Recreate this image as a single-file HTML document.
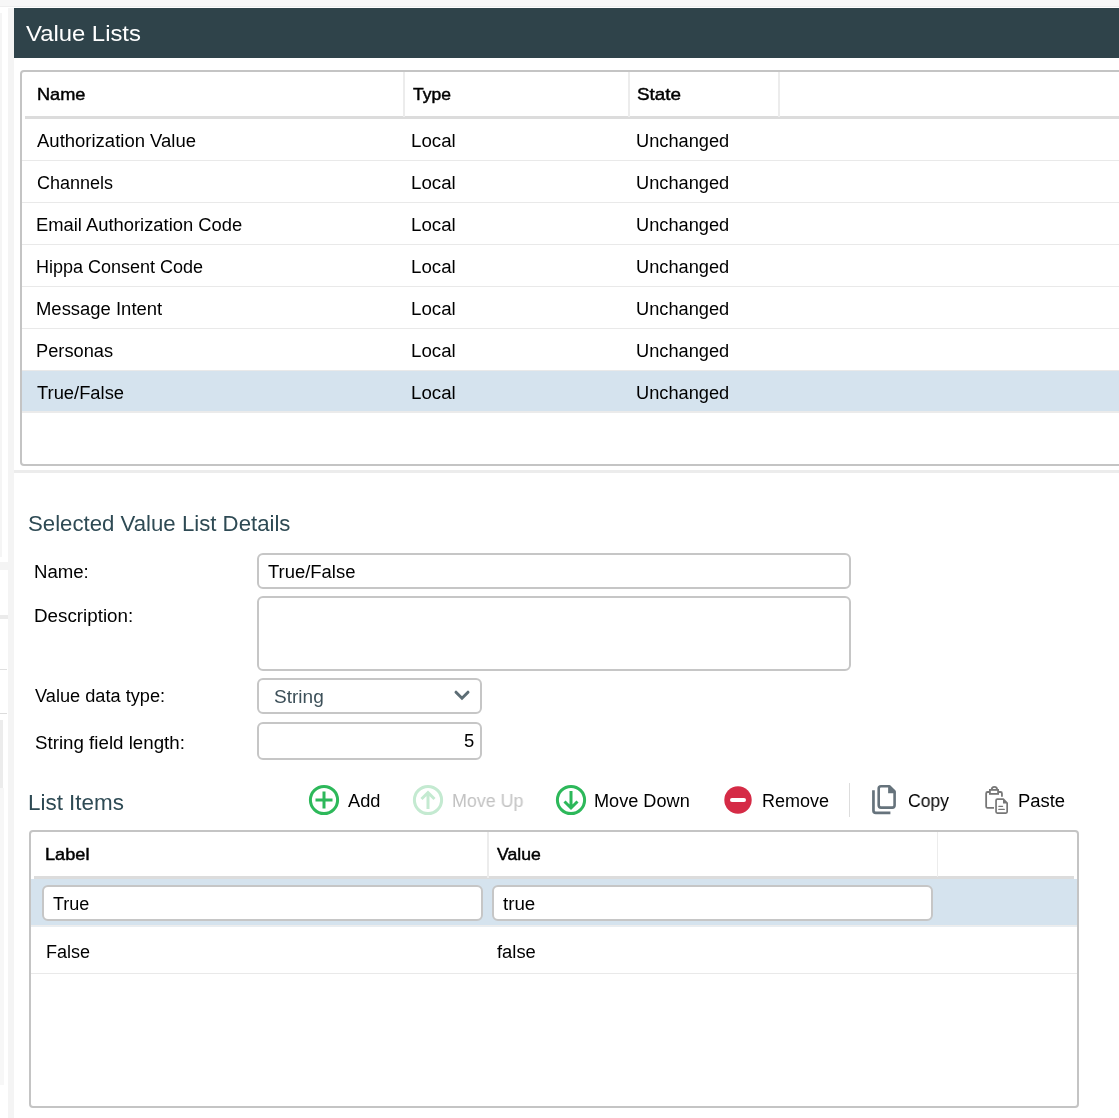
<!DOCTYPE html>
<html><head><meta charset="utf-8">
<style>
html,body{margin:0;padding:0;background:#fff;width:1119px;height:1118px;overflow:hidden;position:relative;font-family:"Liberation Sans",sans-serif;}
.a{position:absolute;box-sizing:border-box;}
.t{position:absolute;white-space:nowrap;will-change:transform;}
</style></head><body>
<div class="a" style="left:0px;top:0px;width:1119px;height:6px;background:#f7f7f7;"></div>
<div class="a" style="left:0px;top:6px;width:1119px;height:1px;background:#eeeeee;"></div>
<div class="a" style="left:0px;top:13px;width:2px;height:544px;background:#f5f5f5;"></div>
<div class="a" style="left:8px;top:8px;width:6px;height:1110px;background:#f4f4f4;"></div>
<div class="a" style="left:0px;top:562px;width:8px;height:8px;background:#f4f4f4;"></div>
<div class="a" style="left:0px;top:615px;width:8px;height:4px;background:#ebebeb;"></div>
<div class="a" style="left:0px;top:669px;width:7px;height:1px;background:#e0e0e0;"></div>
<div class="a" style="left:0px;top:713px;width:7px;height:1px;background:#dcdcdc;"></div>
<div class="a" style="left:0px;top:720px;width:3px;height:68px;background:#ececec;"></div>
<div class="a" style="left:0px;top:788px;width:4px;height:297px;background:#f7f7f7;"></div>
<div class="a" style="left:14px;top:8px;width:1105px;height:50px;background:#2f434a;"></div>
<div class="t" style="left:25.62px;top:22.95px;font-size:22.5px;line-height:22.5px;color:#fff;transform:scaleX(1.0603);transform-origin:0 0;">Value Lists</div>
<div class="a" style="left:20px;top:70px;width:1200px;height:396px;border:2px solid #c4c4c4;border-radius:4px;"></div>
<div class="a" style="left:25px;top:116px;width:1100px;height:3px;background:#dcdcdc;"></div>
<div class="a" style="left:403px;top:72px;width:2px;height:45px;background:#ececec;"></div>
<div class="a" style="left:628px;top:72px;width:2px;height:45px;background:#ececec;"></div>
<div class="a" style="left:778px;top:72px;width:2px;height:45px;background:#ececec;"></div>
<div class="t" style="left:36.63px;top:86.31px;font-size:17px;line-height:17px;color:#000;transform:scaleX(1.0688);transform-origin:0 0;-webkit-text-stroke:0.45px #000;">Name</div>
<div class="t" style="left:413.01px;top:86.31px;font-size:17px;line-height:17px;color:#000;transform:scaleX(1.0285);transform-origin:0 0;-webkit-text-stroke:0.45px #000;">Type</div>
<div class="t" style="left:636.97px;top:86.31px;font-size:17px;line-height:17px;color:#000;transform:scaleX(1.1079);transform-origin:0 0;-webkit-text-stroke:0.45px #000;">State</div>
<div class="a" style="left:22px;top:160px;width:1100px;height:1px;background:#e9e9e9;"></div>
<div class="t" style="left:37.45px;top:131.56px;font-size:18px;line-height:18px;color:#000;transform:scaleX(1.0277);transform-origin:0 0;">Authorization Value</div>
<div class="t" style="left:411.45px;top:131.56px;font-size:18px;line-height:18px;color:#000;transform:scaleX(1.0403);transform-origin:0 0;">Local</div>
<div class="t" style="left:636.08px;top:131.56px;font-size:18px;line-height:18px;color:#000;transform:scaleX(1.0125);transform-origin:0 0;">Unchanged</div>
<div class="a" style="left:22px;top:202px;width:1100px;height:1px;background:#e9e9e9;"></div>
<div class="t" style="left:36.76px;top:173.56px;font-size:18px;line-height:18px;color:#000;transform:scaleX(0.9942);transform-origin:0 0;">Channels</div>
<div class="t" style="left:411.45px;top:173.56px;font-size:18px;line-height:18px;color:#000;transform:scaleX(1.0403);transform-origin:0 0;">Local</div>
<div class="t" style="left:636.08px;top:173.56px;font-size:18px;line-height:18px;color:#000;transform:scaleX(1.0125);transform-origin:0 0;">Unchanged</div>
<div class="a" style="left:22px;top:244px;width:1100px;height:1px;background:#e9e9e9;"></div>
<div class="t" style="left:36.18px;top:215.56px;font-size:18px;line-height:18px;color:#000;transform:scaleX(1.0202);transform-origin:0 0;">Email Authorization Code</div>
<div class="t" style="left:411.45px;top:215.56px;font-size:18px;line-height:18px;color:#000;transform:scaleX(1.0403);transform-origin:0 0;">Local</div>
<div class="t" style="left:636.08px;top:215.56px;font-size:18px;line-height:18px;color:#000;transform:scaleX(1.0125);transform-origin:0 0;">Unchanged</div>
<div class="a" style="left:22px;top:286px;width:1100px;height:1px;background:#e9e9e9;"></div>
<div class="t" style="left:36.21px;top:257.56px;font-size:18px;line-height:18px;color:#000;transform:scaleX(0.9972);transform-origin:0 0;">Hippa Consent Code</div>
<div class="t" style="left:411.45px;top:257.56px;font-size:18px;line-height:18px;color:#000;transform:scaleX(1.0403);transform-origin:0 0;">Local</div>
<div class="t" style="left:636.08px;top:257.56px;font-size:18px;line-height:18px;color:#000;transform:scaleX(1.0125);transform-origin:0 0;">Unchanged</div>
<div class="a" style="left:22px;top:328px;width:1100px;height:1px;background:#e9e9e9;"></div>
<div class="t" style="left:36.17px;top:299.56px;font-size:18px;line-height:18px;color:#000;transform:scaleX(1.0251);transform-origin:0 0;">Message Intent</div>
<div class="t" style="left:411.45px;top:299.56px;font-size:18px;line-height:18px;color:#000;transform:scaleX(1.0403);transform-origin:0 0;">Local</div>
<div class="t" style="left:636.08px;top:299.56px;font-size:18px;line-height:18px;color:#000;transform:scaleX(1.0125);transform-origin:0 0;">Unchanged</div>
<div class="a" style="left:22px;top:370px;width:1100px;height:1px;background:#e9e9e9;"></div>
<div class="t" style="left:36.19px;top:341.56px;font-size:18px;line-height:18px;color:#000;transform:scaleX(1.0138);transform-origin:0 0;">Personas</div>
<div class="t" style="left:411.45px;top:341.56px;font-size:18px;line-height:18px;color:#000;transform:scaleX(1.0403);transform-origin:0 0;">Local</div>
<div class="t" style="left:636.08px;top:341.56px;font-size:18px;line-height:18px;color:#000;transform:scaleX(1.0125);transform-origin:0 0;">Unchanged</div>
<div class="a" style="left:22px;top:371px;width:1100px;height:40px;background:#d5e3ee;"></div>
<div class="a" style="left:22px;top:411px;width:1100px;height:2px;background:#ebebeb;"></div>
<div class="t" style="left:37.27px;top:383.56px;font-size:18px;line-height:18px;color:#000;transform:scaleX(1.0193);transform-origin:0 0;">True/False</div>
<div class="t" style="left:411.45px;top:383.56px;font-size:18px;line-height:18px;color:#000;transform:scaleX(1.0403);transform-origin:0 0;">Local</div>
<div class="t" style="left:636.08px;top:383.56px;font-size:18px;line-height:18px;color:#000;transform:scaleX(1.0125);transform-origin:0 0;">Unchanged</div>
<div class="a" style="left:14px;top:470px;width:1105px;height:3px;background:#ececec;"></div>
<div class="t" style="left:28.26px;top:512.67px;font-size:22px;line-height:22px;color:#2e4a54;transform:scaleX(1.0092);transform-origin:0 0;">Selected Value List Details</div>
<div class="t" style="left:33.96px;top:562.76px;font-size:18px;line-height:18px;color:#000;transform:scaleX(1.0328);transform-origin:0 0;">Name:</div>
<div class="t" style="left:34.14px;top:606.96px;font-size:18px;line-height:18px;color:#000;transform:scaleX(1.0439);transform-origin:0 0;">Description:</div>
<div class="t" style="left:35.41px;top:687.36px;font-size:18px;line-height:18px;color:#000;transform:scaleX(1.0101);transform-origin:0 0;">Value data type:</div>
<div class="t" style="left:34.52px;top:733.56px;font-size:18px;line-height:18px;color:#000;transform:scaleX(1.0402);transform-origin:0 0;">String field length:</div>
<div class="a" style="left:257px;top:553px;width:594px;height:36px;border:2px solid #c6c6c6;border-radius:6px;background:#fff;"></div>
<div class="t" style="left:267.77px;top:562.76px;font-size:18px;line-height:18px;color:#000;transform:scaleX(1.0240);transform-origin:0 0;">True/False</div>
<div class="a" style="left:257px;top:596px;width:594px;height:75px;border:2px solid #c6c6c6;border-radius:6px;background:#fff;"></div>
<div class="a" style="left:257px;top:678px;width:225px;height:36px;border:2px solid #c6c6c6;border-radius:6px;background:#fff;"></div>
<div class="t" style="left:274.13px;top:687.96px;font-size:18px;line-height:18px;color:#3d5059;transform:scaleX(1.0579);transform-origin:0 0;">String</div>
<svg class="a" style="left:453px;top:688px" width="20" height="14" viewBox="0 0 20 14"><path d="M3 4.2 L9 10.2 L15 4.2" fill="none" stroke="#5d6d75" stroke-width="3" stroke-linecap="round"/></svg>
<div class="a" style="left:257px;top:722px;width:225px;height:38px;border:2px solid #c6c6c6;border-radius:6px;background:#fff;"></div>
<div class="t" style="left:463.58px;top:732.36px;font-size:18px;line-height:18px;color:#000;transform:scaleX(1.0253);transform-origin:0 0;">5</div>
<div class="t" style="left:28.36px;top:792.37px;font-size:22px;line-height:22px;color:#2e4a54;transform:scaleX(1.0184);transform-origin:0 0;">List Items</div>
<svg class="a" style="left:306px;top:783px" width="36" height="36" viewBox="0 0 36 36"><circle cx="18" cy="17" r="13.6" fill="none" stroke="#2db85a" stroke-width="3"/><path d="M18 8.5 V25.5 M9.5 17 H26.5" stroke="#2db85a" stroke-width="3"/></svg>
<div class="t" style="left:348.05px;top:791.76px;font-size:18px;line-height:18px;color:#000;transform:scaleX(1.0117);transform-origin:0 0;">Add</div>
<svg class="a" style="left:410px;top:783px" width="36" height="36" viewBox="0 0 36 36"><circle cx="18" cy="17" r="13.6" fill="none" stroke="#c4ead1" stroke-width="3"/><path d="M18 10 V26 M11.5 16 L18 9.5 L24.5 16" fill="none" stroke="#c4ead1" stroke-width="3"/></svg>
<div class="t" style="left:451.77px;top:791.76px;font-size:18px;line-height:18px;color:#c2c2c2;transform:scaleX(0.9916);transform-origin:0 0;">Move Up</div>
<svg class="a" style="left:553px;top:783px" width="36" height="36" viewBox="0 0 36 36"><circle cx="18" cy="17" r="13.6" fill="none" stroke="#2db85a" stroke-width="3"/><path d="M18 8 V24.5 M11.5 18.5 L18 25 L24.5 18.5" fill="none" stroke="#2db85a" stroke-width="3"/></svg>
<div class="t" style="left:594.30px;top:791.76px;font-size:18px;line-height:18px;color:#000;transform:scaleX(1.0073);transform-origin:0 0;">Move Down</div>
<svg class="a" style="left:720px;top:782px" width="36" height="36" viewBox="0 0 36 36"><circle cx="18" cy="18" r="13.7" fill="#d52b46"/><path d="M12 18 H24" stroke="#fff" stroke-width="4" stroke-linecap="round"/></svg>
<div class="t" style="left:761.51px;top:791.76px;font-size:18px;line-height:18px;color:#000;transform:scaleX(0.9944);transform-origin:0 0;">Remove</div>
<div class="a" style="left:849px;top:783px;width:1px;height:34px;background:#dddddd;"></div>
<svg class="a" style="left:866px;top:780px" width="36" height="40" viewBox="866 780 36 40"><path d="M873.45 790.2 V810.5 Q873.45 812.9 875.8 812.9 H890.4" fill="none" stroke="#66737c" stroke-width="2.7"/><path d="M881 786.2 H889.3 L894.6 791.5 V805.3 Q894.6 807.6 892.3 807.6 H881 Q878.7 807.6 878.7 805.3 V788.5 Q878.7 786.2 881 786.2 Z" fill="none" stroke="#66737c" stroke-width="2.6" stroke-linejoin="round"/><path d="M888.1 785.5 L896 793.3 H888.1 Z" fill="#66737c"/></svg>
<div class="t" style="left:907.78px;top:791.76px;font-size:18px;line-height:18px;color:#000;transform:scaleX(0.9750);transform-origin:0 0;">Copy</div>
<svg class="a" style="left:980px;top:780px" width="36" height="40" viewBox="980 780 36 40"><path d="M989 792 H987.6 Q986.15 792 986.15 793.5 V806.4 Q986.15 807.9 987.6 807.9 H994" fill="none" stroke="#777777" stroke-width="1.8"/><path d="M999 792 H1000.5 Q1001.95 792 1001.95 793.5 V796.7" fill="none" stroke="#777777" stroke-width="1.8"/><rect x="989.9" y="789.9" width="8.2" height="4" fill="none" stroke="#777777" stroke-width="1.8"/><path d="M991.7 789.6 A2.7 2.7 0 0 1 997.1 789.6" fill="none" stroke="#777777" stroke-width="1.8"/><path d="M997.3 799.15 H1003.3 L1007.15 803 V811.8 Q1007.15 813.05 1005.9 813.05 H997.3 Q996.05 813.05 996.05 811.8 V800.4 Q996.05 799.15 997.3 799.15 Z" fill="#fff" stroke="#777777" stroke-width="1.7" stroke-linejoin="round"/><path d="M1003 799 L1007.5 803.5 H1003 Z" fill="#777777"/><path d="M998.8 806.35 H1002.6 M998.8 809.45 H1004.3" stroke="#777777" stroke-width="1.2" stroke-linecap="round"/></svg>
<div class="t" style="left:1017.67px;top:791.76px;font-size:18px;line-height:18px;color:#000;transform:scaleX(1.0238);transform-origin:0 0;">Paste</div>
<div class="a" style="left:29px;top:830px;width:1050px;height:278px;border:2px solid #c4c4c4;border-radius:4px;"></div>
<div class="a" style="left:34px;top:876px;width:1040px;height:3px;background:#dcdcdc;"></div>
<div class="a" style="left:487px;top:832px;width:2px;height:46px;background:#ececec;"></div>
<div class="a" style="left:937px;top:832px;width:1px;height:45px;background:#ececec;"></div>
<div class="t" style="left:45.43px;top:845.91px;font-size:17px;line-height:17px;color:#000;transform:scaleX(1.0688);transform-origin:0 0;-webkit-text-stroke:0.45px #000;">Label</div>
<div class="t" style="left:497.25px;top:845.91px;font-size:17px;line-height:17px;color:#000;transform:scaleX(1.0358);transform-origin:0 0;-webkit-text-stroke:0.45px #000;">Value</div>
<div class="a" style="left:31px;top:879px;width:1046px;height:46px;background:#d5e3ee;"></div>
<div class="a" style="left:31px;top:925px;width:1046px;height:1px;background:#ededed;"></div>
<div class="a" style="left:31px;top:926px;width:1046px;height:1px;background:#e8edf1;"></div>
<div class="a" style="left:42px;top:885px;width:441px;height:36px;border:2px solid #c6c6c6;border-radius:6px;background:#fff;"></div>
<div class="t" style="left:52.78px;top:894.76px;font-size:18px;line-height:18px;color:#000;transform:scaleX(0.9977);transform-origin:0 0;">True</div>
<div class="a" style="left:492px;top:885px;width:441px;height:36px;border:2px solid #c6c6c6;border-radius:6px;background:#fff;"></div>
<div class="t" style="left:503.41px;top:894.76px;font-size:18px;line-height:18px;color:#000;transform:scaleX(1.0410);transform-origin:0 0;">true</div>
<div class="a" style="left:31px;top:973px;width:1046px;height:1px;background:#e9e9e9;"></div>
<div class="t" style="left:45.70px;top:942.76px;font-size:18px;line-height:18px;color:#000;transform:scaleX(1.0033);transform-origin:0 0;">False</div>
<div class="t" style="left:496.93px;top:942.76px;font-size:18px;line-height:18px;color:#000;transform:scaleX(1.0192);transform-origin:0 0;">false</div>
</body></html>
